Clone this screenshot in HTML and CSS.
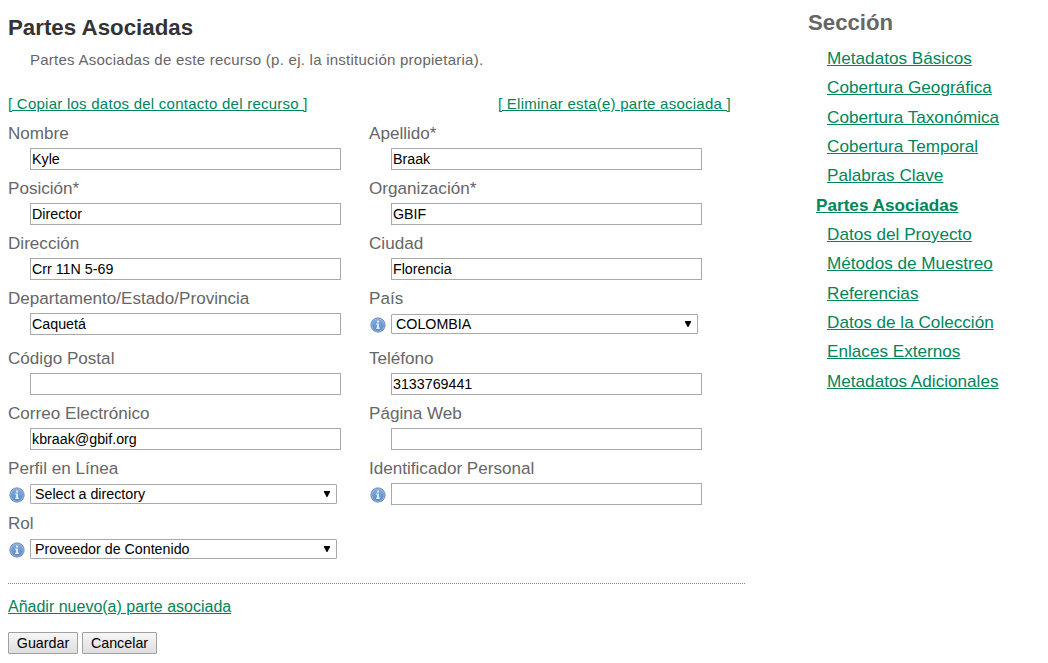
FILE: index.html
```html
<!DOCTYPE html>
<html lang="es">
<head>
<meta charset="utf-8">
<title>Partes Asociadas</title>
<link rel="stylesheet" href="styles.css">
</head>
<body>
<svg class="defs" width="0" height="0">
  <defs>
    <linearGradient id="blue" x1="0" y1="0" x2="0" y2="1"><stop offset="0" stop-color="#84acdc"/><stop offset="1" stop-color="#5a8bc8"/></linearGradient>
    <symbol id="info" viewBox="0 0 16 16">
      <circle cx="8" cy="8" r="7.1" fill="#a3bee0" stroke="#6088bb" stroke-width="1"/>
      <circle cx="8" cy="8" r="6" fill="url(#blue)"/>
      <path d="M7 3.6h2v1.8H7zM6.2 6.4H9v4.2h.9V12H6.2v-1.4H7V7.8h-.8z" fill="#dce8f5"/>
    </symbol>
    <symbol id="arrow" viewBox="0 0 6 6"><path d="M0 0h6v1L3.4 6h-.8L0 1z" fill="#000"/></symbol>
  </defs>
</svg>
<div class="page">
  <main class="main">
    <h1 class="title">Partes Asociadas</h1>
    <p class="intro">Partes Asociadas de este recurso (p. ej. la institución propietaria).</p>
    <div class="actions">
      <a class="link" href="#">[ Copiar los datos del contacto del recurso ]</a>
      <a class="link" href="#">[ Eliminar esta(e) parte asociada ]</a>
    </div>
    <form>
      <div class="fields">
        <div class="field"><label class="label">Nombre</label><div class="control"><input class="input" value="Kyle"></div></div>
        <div class="field"><label class="label">Apellido*</label><div class="control"><input class="input" value="Braak"></div></div>
        <div class="field"><label class="label">Posición*</label><div class="control"><input class="input" value="Director"></div></div>
        <div class="field"><label class="label">Organización*</label><div class="control"><input class="input" value="GBIF"></div></div>
        <div class="field"><label class="label">Dirección</label><div class="control"><input class="input" value="Crr 11N 5-69"></div></div>
        <div class="field"><label class="label">Ciudad</label><div class="control"><input class="input" value="Florencia"></div></div>
        <div class="field tall"><label class="label">Departamento/Estado/Provincia</label><div class="control"><input class="input" value="Caquetá"></div></div>
        <div class="field tall"><label class="label">País</label><div class="control"><svg class="info"><use href="#info"/></svg><div class="select">COLOMBIA<svg class="arrow"><use href="#arrow"/></svg></div></div></div>
        <div class="field"><label class="label">Código Postal</label><div class="control"><input class="input" value=""></div></div>
        <div class="field"><label class="label">Teléfono</label><div class="control"><input class="input" value="3133769441"></div></div>
        <div class="field"><label class="label">Correo Electrónico</label><div class="control"><input class="input" value="kbraak@gbif.org"></div></div>
        <div class="field"><label class="label">Página Web</label><div class="control"><input class="input" value=""></div></div>
        <div class="field"><label class="label">Perfil en Línea</label><div class="control"><svg class="info"><use href="#info"/></svg><div class="select">Select a directory<svg class="arrow"><use href="#arrow"/></svg></div></div></div>
        <div class="field"><label class="label">Identificador Personal</label><div class="control"><svg class="info"><use href="#info"/></svg><input class="input" value=""></div></div>
        <div class="field"><label class="label">Rol</label><div class="control"><svg class="info"><use href="#info"/></svg><div class="select">Proveedor de Contenido<svg class="arrow"><use href="#arrow"/></svg></div></div></div>
      </div>
      <div class="divider"></div>
      <a class="link add" href="#">Añadir nuevo(a) parte asociada</a>
      <div class="buttons">
        <button class="button save" type="button">Guardar</button>
        <button class="button cancel" type="button">Cancelar</button>
      </div>
    </form>
  </main>
  <aside class="sidebar">
    <h2 class="section">Sección</h2>
    <ul class="menu">
      <li><a class="link" href="#">Metadatos Básicos</a></li>
      <li><a class="link" href="#">Cobertura Geográfica</a></li>
      <li><a class="link" href="#">Cobertura Taxonómica</a></li>
      <li><a class="link" href="#">Cobertura Temporal</a></li>
      <li><a class="link" href="#">Palabras Clave</a></li>
      <li class="current"><a class="link" href="#">Partes Asociadas</a></li>
      <li><a class="link" href="#">Datos del Proyecto</a></li>
      <li><a class="link" href="#">Métodos de Muestreo</a></li>
      <li><a class="link" href="#">Referencias</a></li>
      <li><a class="link" href="#">Datos de la Colección</a></li>
      <li><a class="link" href="#">Enlaces Externos</a></li>
      <li><a class="link" href="#">Metadatos Adicionales</a></li>
    </ul>
  </aside>
</div>
</body>
</html>
```
FILE: styles.css
```css
* { box-sizing: border-box; }
body { margin: 0; background: #fff; color: #666; font: 17.1px "Liberation Sans", Arial, sans-serif; }
.defs { display: block; }
.page { display: flex; height: 663px; overflow: hidden; }
.main { width: 745px; padding: 14px 0 0 8px; }
.title { margin: 0; font-size: 22.3px; line-height: 28px; color: #333; }
.intro { margin: 8px 0 0 22px; font-size: 15px; line-height: 20px; letter-spacing: .25px; }
.link { color: #00855a; text-decoration: underline; white-space: nowrap; }
.actions { display: flex; justify-content: space-between; margin-top: 24px; padding-right: 14px; font-size: 15px; line-height: 20px; letter-spacing: .25px; }
.fields { display: grid; grid-template-columns: 361px 361px; margin-top: 10px; }
.field { height: 55px; }
.tall { height: 60px; }
.label { display: block; line-height: 20px; }
.control { display: flex; align-items: flex-start; padding-left: 22px; margin-top: 4px; }
.input { width: 311px; height: 22px; padding: 1px; border: 1px solid #a9a9a9; background: #fff; color: #000; font: 14.25px "Liberation Sans", Arial, sans-serif; }
.info { width: 16px; height: 16px; margin: 4px 5.5px 0 -21.5px; flex: none; }
.select { display: flex; align-items: center; justify-content: space-between; width: 307px; height: 20px; margin-top: 1px; padding: 0 6px 0 4px; border: 1px solid #a9a9a9; border-radius: 1px; color: #000; font-size: 14.25px; line-height: 18px; }
.arrow { width: 6px; height: 6px; }
.divider { margin-top: 14px; border-top: 1px dotted #888; }
.add { display: block; width: max-content; margin-top: 13px; font-size: 16px; line-height: 20px; }
.buttons { display: flex; gap: 4px; margin-top: 15px; }
.button { height: 22px; padding: 0; border: 1px solid #a0a0a0; border-radius: 1px; background: linear-gradient(#f6f6f6, #dedede); color: #000; font: 14.3px "Liberation Sans", Arial, sans-serif; }
.save { width: 70px; }
.cancel { width: 75px; }
.sidebar { padding: 9px 0 0 63px; }
.section { margin: 0; font-size: 22.2px; line-height: 28px; }
.menu { margin: 6.8px 0 0 19px; padding: 0; list-style: none; font-size: 17.15px; line-height: 29.36px; }
.current { margin-left: -11px; font-weight: bold; }
```
